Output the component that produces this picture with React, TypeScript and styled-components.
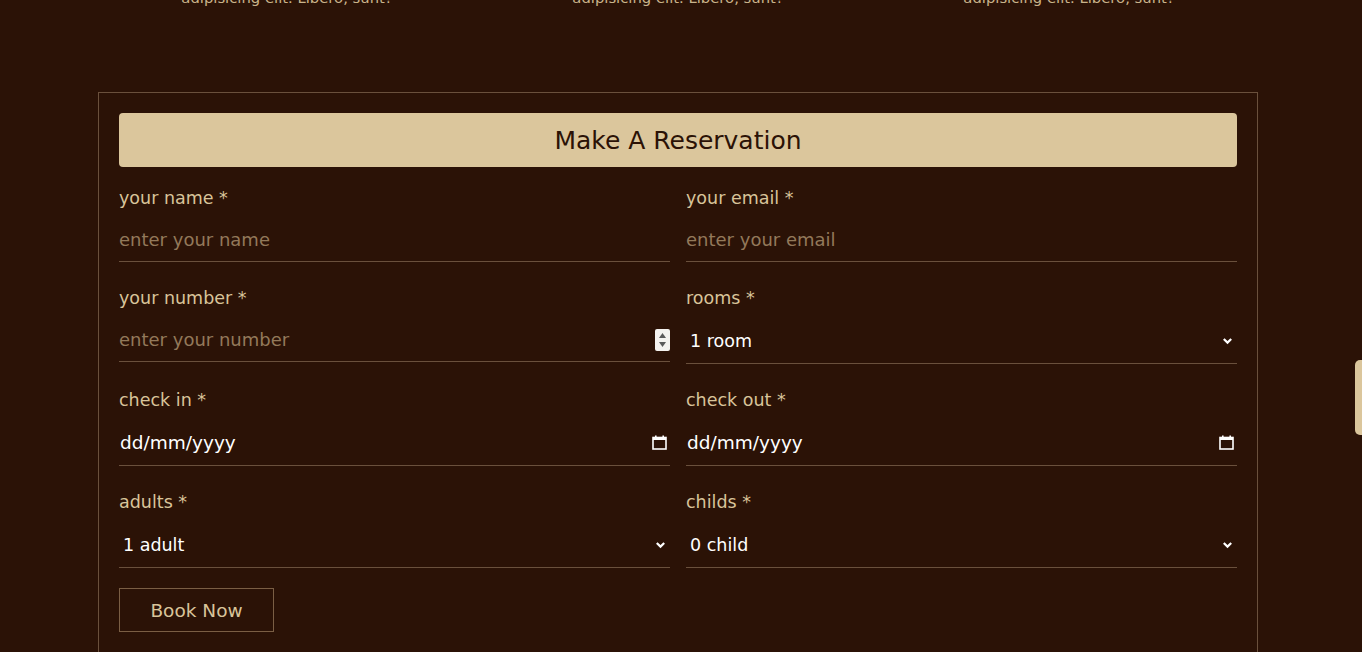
import React from 'react'
import styled, { createGlobalStyle } from 'styled-components'

const GlobalStyle = createGlobalStyle`
  * {
    box-sizing: border-box;
  }

  body {
    margin: 0;
    background: #2b1206;
    font-family: 'DejaVu Sans', 'Noto Sans', sans-serif;
    overflow: hidden;
  }
`

const Page = styled.div`
  width: calc(100% - 6px);
  height: 652px;
  overflow: hidden;
`

const Teasers = styled.div`
  display: grid;
  grid-template-columns: repeat(3, 378px);
  justify-content: center;
  column-gap: 13px;
  margin-top: -13px;
`

const TeaserText = styled.p`
  margin: 0;
  text-align: center;
  font-size: 14.8px;
  line-height: 22px;
  color: #c9b38a;
`

const Box = styled.div`
  width: 1160px;
  margin: 83px auto 0;
  padding: 20px;
  border: 1px solid #6a503c;
  border-bottom: none;
`

const Heading = styled.h3`
  margin: 0 0 17px;
  height: 54px;
  display: flex;
  align-items: center;
  justify-content: center;
  border-radius: 4px;
  background: #dbc69c;
  color: #2b1206;
  font-size: 25px;
  font-weight: 400;
`

const Grid = styled.div`
  display: grid;
  grid-template-columns: 1fr 1fr;
  column-gap: 16px;
  row-gap: 22px;
`

const Field = styled.label`
  display: block;
`

const Label = styled.span`
  display: block;
  height: 26px;
  line-height: 28px;
  font-size: 17.5px;
  color: #d9c49a;
  margin-bottom: 8px;
`

const Control = styled.div<{ $tall?: boolean }>`
  display: flex;
  align-items: center;
  height: ${({ $tall }) => ($tall ? 46 : 44)}px;
  border-bottom: 1px solid #6a503c;
`

const TextInput = styled.input<{ $filled?: boolean }>`
  flex: 1;
  min-width: 0;
  height: 100%;
  padding: 0 0 0 ${({ $filled }) => ($filled ? 1 : 0)}px;
  border: none;
  outline: none;
  background: transparent;
  font-family: inherit;
  font-size: ${({ $filled }) => ($filled ? 18.5 : 18)}px;
  color: #fff;

  &::placeholder {
    color: #93795a;
  }
`

const Select = styled.select`
  flex: 1;
  min-width: 0;
  height: 100%;
  padding: 0 0 0 4px;
  border: none;
  outline: none;
  background: transparent;
  appearance: none;
  font-family: inherit;
  font-size: 17.5px;
  color: #fff;

  option {
    color: #2b1206;
  }
`

const Spinner = styled.span`
  width: 15px;
  height: 22px;
  display: flex;
  flex-direction: column;
  align-items: center;
  justify-content: center;
  gap: 4px;
  background: #f4f2ef;
  border-radius: 2px;
`

const Icon = styled.svg`
  flex: none;
  margin-right: 4px;
`

const BookButton = styled.button`
  margin-top: 20px;
  width: 155px;
  height: 44px;
  border: 1px solid #7a5e44;
  background: transparent;
  color: #d9c49a;
  font-family: inherit;
  font-size: 18.5px;
  cursor: pointer;
`

const ScrollThumb = styled.div`
  position: fixed;
  top: 360px;
  right: 0;
  width: 7px;
  height: 75px;
  border-radius: 5px 0 0 5px;
  background: #dbc69c;
`

const Chevron = () => (
  <Icon width="11" height="10" viewBox="0 0 11 10">
    <path d="M1.8 3 L5.5 6.6 L9.2 3" fill="none" stroke="#fff" strokeWidth="2.2" />
  </Icon>
)

const Calendar = () => (
  <Icon width="15" height="15" viewBox="0 0 15 15" style={{ marginRight: 3 }}>
    <rect x="1" y="2.5" width="13" height="11.5" fill="none" stroke="#fff" strokeWidth="1.6" />
    <rect x="1" y="2" width="13" height="3" fill="#fff" />
    <rect x="3" y="0.5" width="1.6" height="2" fill="#fff" />
    <rect x="10.4" y="0.5" width="1.6" height="2" fill="#fff" />
  </Icon>
)

const Arrow = ({ up }: { up?: boolean }) => (
  <svg width="7" height="5" viewBox="0 0 7 5">
    <path d={up ? 'M0 5 L3.5 0 L7 5 Z' : 'M0 0 L3.5 5 L7 0 Z'} fill="#5a5a5a" />
  </svg>
)

const teasers = ['adipisicing elit. Libero, sunt?', 'adipisicing elit. Libero, sunt?', 'adipisicing elit. Libero, sunt?']

const App = () => {
  return (
    <Page>
      <GlobalStyle />
      <Teasers>
        {teasers.map((text, i) => (
          <TeaserText key={i}>{text}</TeaserText>
        ))}
      </Teasers>

      <Box>
        <Heading>Make A Reservation</Heading>
        <Grid>
          <Field>
            <Label>your name *</Label>
            <Control>
              <TextInput type="text" placeholder="enter your name" />
            </Control>
          </Field>
          <Field>
            <Label>your email *</Label>
            <Control>
              <TextInput type="email" placeholder="enter your email" />
            </Control>
          </Field>

          <Field>
            <Label>your number *</Label>
            <Control>
              <TextInput type="text" inputMode="numeric" placeholder="enter your number" />
              <Spinner>
                <Arrow up />
                <Arrow />
              </Spinner>
            </Control>
          </Field>
          <Field>
            <Label>rooms *</Label>
            <Control $tall>
              <Select defaultValue="1">
                <option value="1">1 room</option>
                <option value="2">2 rooms</option>
                <option value="3">3 rooms</option>
              </Select>
              <Chevron />
            </Control>
          </Field>

          <Field>
            <Label>check in *</Label>
            <Control $tall>
              <TextInput $filled type="text" defaultValue="dd/mm/yyyy" />
              <Calendar />
            </Control>
          </Field>
          <Field>
            <Label>check out *</Label>
            <Control $tall>
              <TextInput $filled type="text" defaultValue="dd/mm/yyyy" />
              <Calendar />
            </Control>
          </Field>

          <Field>
            <Label>adults *</Label>
            <Control $tall>
              <Select defaultValue="1">
                <option value="1">1 adult</option>
                <option value="2">2 adults</option>
                <option value="3">3 adults</option>
              </Select>
              <Chevron />
            </Control>
          </Field>
          <Field>
            <Label>childs *</Label>
            <Control $tall>
              <Select defaultValue="0">
                <option value="0">0 child</option>
                <option value="1">1 child</option>
                <option value="2">2 childs</option>
              </Select>
              <Chevron />
            </Control>
          </Field>
        </Grid>
        <BookButton type="button">Book Now</BookButton>
      </Box>
      <ScrollThumb />
    </Page>
  )
}

export default App
